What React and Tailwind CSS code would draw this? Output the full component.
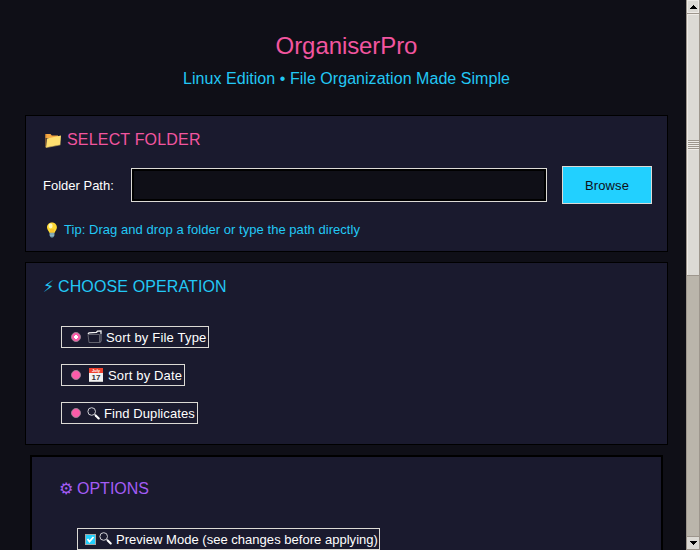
import React from "react";

function FolderIcon() {
  return (
    <svg className="-mt-px block h-[18px] w-[18px] shrink-0" viewBox="0 0 18 18">
      <path d="M1.5 3h5l1.3 1.5H14V7H1.5z" fill="#f5a742" />
      <path d="M1.5 3.2h1L2 16l-.5-.6z" fill="#d98d30" />
      <path d="M3 7.5 17 4.5 16.3 13.8 2 16.4z" fill="#ffe070" />
      <path d="M1.5 15.5 2 16.6l14.3-2.7" fill="none" stroke="#d9b95c" strokeWidth=".6" />
    </svg>
  );
}

function BulbIcon() {
  return (
    <svg className="block h-4 w-4 shrink-0" viewBox="0 0 16 16">
      <path d="M8 .5c3 0 4.900 2.200 4.900 4.900 0 2.500-2 3.400-2.400 5.600h-5C5.100 8.800 3 7.900 3 5.400 3 2.700 5 .5 8 .5z" fill="#fdd835" />
      <ellipse cx="6.600" cy="4" rx="2" ry="2.400" fill="#fff9b8" />
      <path d="M7 7v4M9 7v4" stroke="#f2a51c" strokeWidth=".7" />
      <path d="M5.600 10.700h4.800v3L9 15.400H7l-1.400-1.700z" fill="#6896a7" />
      <path d="M5.600 12h4.800M6 13.700h4" stroke="#b6d0d8" strokeWidth=".6" />
    </svg>
  );
}

function CalendarIcon() {
  return (
    <svg className="block h-[14px] w-[14px] shrink-0" viewBox="0 0 14 14">
      <path d="M0 4h14v10H0z" fill="#f2f2f2" />
      <path d="M0 0h14v5H0z" fill="#f0432f" />
      <path d="M0 13.600h14" stroke="#b5b5b5" strokeWidth=".8" />
      <text x="7" y="3.600" textAnchor="middle" fontSize="4" fontWeight="700" fill="#fff" fontFamily="Liberation Sans, sans-serif">July</text>
      <text x="7" y="12.200" textAnchor="middle" fontSize="8" fontWeight="700" fill="#333" fontFamily="Liberation Sans, sans-serif">17</text>
    </svg>
  );
}

function DividersIcon() {
  return (
    <svg className="block h-[14px] w-[15px] shrink-0" viewBox="0 0 15 14" fill="none">
      <path d="M1 4.200 2 2.900 9.500 2.300l1-1.100 3.500-.2v3" stroke="#f2f2f2" strokeWidth="1.300" />
      <path d="M1 4.500h11.500v8H2z" stroke="#696974" strokeWidth=".9" />
      <path d="M14 3v8.500l-1.300 1" stroke="#8f8f98" strokeWidth=".9" />
    </svg>
  );
}

function SearchIcon() {
  return (
    <svg className="block h-[13px] w-[13px] shrink-0" viewBox="0 0 13 13" fill="none">
      <circle cx="4.700" cy="4.500" r="3.800" stroke="#d0d0d5" strokeWidth="1" />
      <path d="m7.500 7.200 1.400 1.300" stroke="#d0d0d5" strokeWidth="1" />
      <path d="m8.700 8.400 3 3" stroke="#fff" strokeWidth="2.100" strokeLinecap="round" />
    </svg>
  );
}

function Radio({ checked }) {
  return (
    <svg className="block h-[10px] w-[10px] shrink-0" viewBox="0 0 10 10">
      <circle cx="5" cy="5" r="4.500" fill="#fb5ca9" stroke="#97808f" strokeWidth="1" />
      {checked && <path d="M4 3h2v1h1v2H6v1H4V6H3V4h1z" fill="#fff" />}
    </svg>
  );
}

function Choice({ icon, checked, width, iconClass, textClass, children }) {
  return (
    <div className={"flex h-[22px] items-center border border-[#dcdad5] pl-[9px] text-[13px] whitespace-nowrap text-white " + width}>
      <Radio checked={checked} />
      <span className={"flex " + iconClass}>{icon}</span>
      <span className={"pt-[2px] " + textClass}>{children}</span>
    </div>
  );
}

function Scrollbar() {
  return (
    <div className="flex h-full w-[14px] shrink-0 flex-col border-x border-[#9d968d] bg-[#bab5ab]">
      <div className="flex h-[13px] items-center justify-center border border-[#eeebe7] bg-[#dcdad5]">
        <svg className="block h-1 w-[7px]" viewBox="0 0 7 4" shapeRendering="crispEdges"><path d="M3 0h1v1h1v1h1v1h1v1H0V3h1V2h1V1h1z" fill="#000" /></svg>
      </div>
      <div className="flex h-[263px] flex-col border-y border-[#9d968d]">
        <div className="flex flex-1 items-center border-t border-l border-[#eeebe7] bg-[#dcdad5]">
          <div className="flex w-full flex-col gap-px bg-[#eeebe7] pb-px">
            <div className="h-px bg-[#9d968d]" />
            <div className="h-px bg-[#9d968d]" />
            <div className="h-px bg-[#9d968d]" />
            <div className="h-px bg-[#9d968d]" />
            <div className="h-px bg-[#9d968d]" />
          </div>
        </div>
      </div>
      <div className="flex-1" />
      <div className="flex h-[14px] items-center justify-center border-t border-b border-[#9d968d] bg-[#dcdad5]">
        <svg className="block h-1 w-[7px]" viewBox="0 0 7 4" shapeRendering="crispEdges"><path d="M0 0h7v1H6v1H5v1H4v1H3V3H2V2H1V1H0z" fill="#000" /></svg>
      </div>
    </div>
  );
}

export default function App() {
  return (
    <div className="flex h-[550px] w-[700px] overflow-hidden bg-[#0f0f17] font-['Liberation_Sans',Arial,sans-serif]">
      <main className="flex h-full w-[686px] shrink-0 flex-col overflow-hidden">
        <header className="flex h-[115px] shrink-0 flex-col items-center pt-[31px] pl-[7px]">
          <h1 className="h-[31px] text-[24px] leading-[30px] tracking-[-0.08px] text-[#f2559f]">OrganiserPro</h1>
          <p className="mt-[7px] text-[16px] leading-5 tracking-[0.045px] text-[#22c8f5]">Linux Edition • File Organization Made Simple</p>
        </header>

        <section className="ml-[25px] flex h-[137px] w-[643px] shrink-0 flex-col border border-black bg-[#1a1a2e] pl-[17px]">
          <h2 className="mt-[14px] flex h-5 items-center pl-px text-[16px] leading-5 text-[#f2559f]">
            <FolderIcon />
            <span className="ml-[5px] tracking-[0.18px]">SELECT FOLDER</span>
          </h2>
          <div className="mt-[16px] flex h-[38px] items-center">
            <label className="w-[88px] pt-[2px] text-[13px] text-white">Folder Path:</label>
            <div className="h-[34px] w-[416px] border border-[#dcdad5] bg-black p-[2px]">
              <div className="h-full bg-[#0f0f17]" />
            </div>
            <button className="ml-[15px] h-[38px] w-[90px] border border-[#dcdad5] bg-[#22d0ff] pt-[2px] text-[13px] tracking-[0.12px] text-[#0f0f17]">Browse</button>
          </div>
          <p className="mt-[18px] flex items-center pl-px text-[13px] leading-4 text-[#22c8f5]">
            <BulbIcon />
            <span className="ml-[4px] tracking-[0.045px]">Tip: Drag and drop a folder or type the path directly</span>
          </p>
        </section>

        <section className="mt-[10px] ml-[25px] flex h-[183px] w-[643px] shrink-0 flex-col border border-black bg-[#1a1a2e] pl-[17px]">
          <h2 className="mt-[14px] flex h-5 items-center text-[16px] leading-5 text-[#22c8f5]">
            <span className="w-[15px] font-['DejaVu_Sans',sans-serif]">⚡</span>
            <span className="tracking-[0.12px]">CHOOSE OPERATION</span>
          </h2>
          <div className="mt-[29px] ml-[18px] flex flex-col gap-4">
            <Choice checked width="w-[148px]" iconClass="ml-[6px]" textClass="ml-[4px] tracking-[0.19px]" icon={<DividersIcon />}>Sort by File Type</Choice>
            <Choice width="w-[124px]" iconClass="ml-[8px]" textClass="ml-[5px] tracking-[0.16px]" icon={<CalendarIcon />}>Sort by Date</Choice>
            <Choice width="w-[137px]" iconClass="ml-[6px]" textClass="ml-[4px] tracking-[0.08px]" icon={<SearchIcon />}>Find Duplicates</Choice>
          </div>
        </section>

        <section className="mt-[10px] ml-[30px] flex h-[150px] w-[633px] shrink-0 flex-col border-2 border-black bg-[#1a1a2e] pl-[27px]">
          <h2 className="mt-[22px] flex h-5 items-center text-[16px] leading-5 text-[#a35cf5]">
            <span className="w-[18px] font-['DejaVu_Sans',sans-serif]">⚙</span>
            <span>OPTIONS</span>
          </h2>
          <div className="mt-[29px] ml-[18px] flex h-[22px] w-[303px] items-center border border-[#dcdad5] pl-[7px] text-[13px] whitespace-nowrap text-white">
            <svg className="block h-[11px] w-[11px] shrink-0" viewBox="0 0 11 11">
              <path d="M0 0h11v11H0z" fill="#a5a5a5" />
              <path d="M1 1h9v9H1z" fill="#22d0ff" />
              <path d="m2.500 5 2 2.500L8.500 3" fill="none" stroke="#fff" strokeWidth="1.800" />
            </svg>
            <span className="ml-[3px] flex pb-px"><SearchIcon /></span>
            <span className="ml-[4px] pt-[2px] tracking-[0.025px]">Preview Mode (see changes before applying)</span>
          </div>
        </section>
      </main>
      <Scrollbar />
    </div>
  );
}
